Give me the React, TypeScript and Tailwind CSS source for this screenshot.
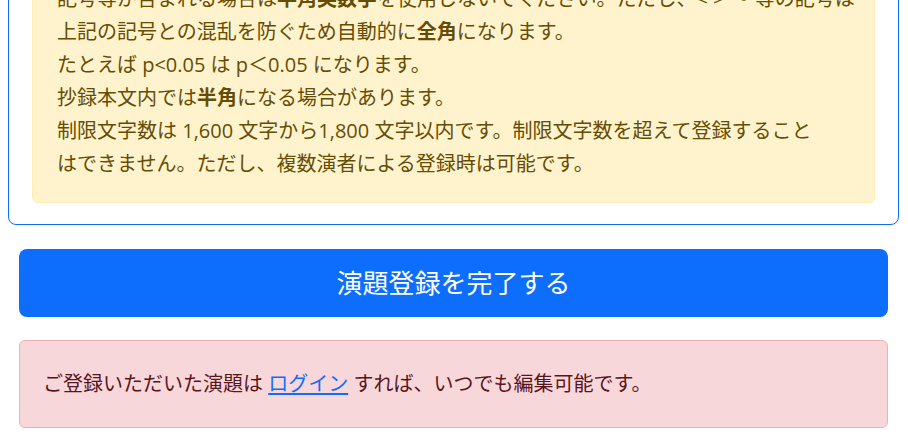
export default function App() {
  return (
    <div className="min-h-screen overflow-hidden bg-white font-['Open_Sans','Noto_Sans_CJK_JP',sans-serif]">
      <div className="-mt-[67px] pl-2 pr-[9px]">
        {/* Card with notice */}
        <div className="rounded-lg border border-[#0d6efd] px-[23px] pt-[23px] pb-[21px]">
          <div className="rounded-md border border-[#ffecb5] bg-[#fff3cd] pl-6 pr-4 pt-6 pb-[22px] text-[20px] leading-[33px] text-[#664d03] whitespace-nowrap">
            記号等が含まれる場合は<b>半角英数字</b>を使用しないでください。ただし、&lt; &gt; ～ 等の記号は
            <br />
            上記の記号との混乱を防ぐため自動的に<b>全角</b>になります。
            <br />
            たとえば p&lt;0.05 は p＜0.05 になります。
            <br />
            抄録本文内では<b>半角</b>になる場合があります。
            <br />
            制限文字数は 1,600 文字から1,800 文字以内です。制限文字数を超えて登録すること
            <br />
            はできません。ただし、複数演者による登録時は可能です。
          </div>
        </div>

        <div className="px-[11px]">
          <button className="mt-6 flex h-[68px] w-full items-center justify-center rounded-lg bg-[#0d6efd] text-[26px] text-white">
            演題登録を完了する
          </button>

          <div className="mt-[23px] rounded-md border border-[#f1aeb5] bg-[#f8d7da] pl-[23px] pr-6 py-[26px] text-[20px] leading-[34px] text-[#58151c]">
            ご登録いただいた演題は{' '}
            <a href="#" className="text-[#0d6efd] underline underline-offset-2">
              ログイン
            </a>{' '}
            すれば、いつでも編集可能です。
          </div>
        </div>
      </div>
    </div>
  );
}
